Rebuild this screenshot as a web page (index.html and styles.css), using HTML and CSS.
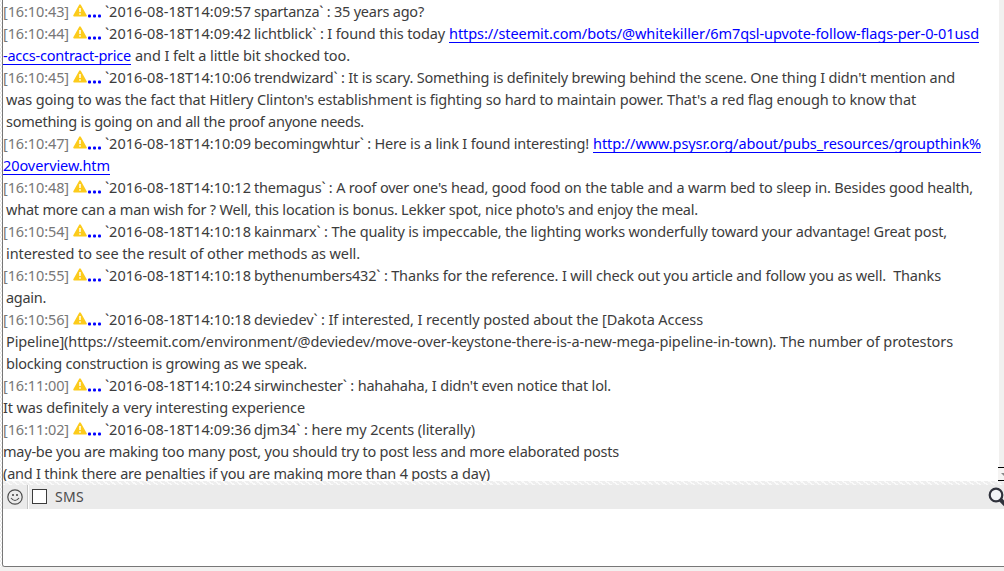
FILE: index.html
```html
<!DOCTYPE html>
<html lang="en">
<head>
    <meta charset="UTF-8">
    <meta name="viewport" content="width=device-width, initial-scale=1.0">
    <link rel="stylesheet" href="styles.css">
    <title>Chat</title>
</head>
<body>

    <svg class="defs" width="0" height="0">
        <symbol id="warn" viewBox="0 0 14 13">
            <path d="M7 1.2 L12.9 11.6 H1.1 Z" fill="#fccb1b" stroke="#fccb1b" stroke-width="1.8" stroke-linejoin="round"/>
            <path d="M7 4 V8 M7 9.2 V10.8" stroke="#fff" stroke-width="1.5"/>
        </symbol>
        <symbol id="dots" viewBox="0 0 15 4">
            <rect x="1" y="0.5" width="3" height="3" rx="1"/>
            <rect x="6" y="0.5" width="3" height="3" rx="1"/>
            <rect x="11" y="0.5" width="3" height="3" rx="1"/>
        </symbol>
    </svg>

    <div class="window">
        <div class="edge"></div>
        <div class="panel">
            <div class="chat">
                <div class="messages">
                    <div class="line"><span class="time" data-width="66">[16:10:43]</span><svg class="warn"><use href="#warn"/></svg><svg class="dots"><use href="#dots"/></svg><span class="stamp" data-width="146">`2016-08-18T14:09:57</span><span data-width="170">spartanza` : 35 years ago?</span></div>
                    <div class="line"><span class="time" data-width="66">[16:10:44]</span><svg class="warn"><use href="#warn"/></svg><svg class="dots"><use href="#dots"/></svg><span class="stamp" data-width="146">`2016-08-18T14:09:42</span><span data-width="191">lichtblick` : I found this today</span><a class="after" href="#" data-width="530">https://steemit.com/bots/@whitekiller/6m7qsl-upvote-follow-flags-per-0-01usd</a></div>
                    <div class="line"><a href="#" data-width="128">-accs-contract-price</a><span class="after" data-width="215">and I felt a little bit shocked too.</span></div>
                    <div class="line"><span class="time" data-width="66">[16:10:45]</span><svg class="warn"><use href="#warn"/></svg><svg class="dots"><use href="#dots"/></svg><span class="stamp" data-width="146">`2016-08-18T14:10:06</span><span data-width="701">trendwizard` : It is scary. Something is definitely brewing behind the scene. One thing I didn't mention and</span></div>
                    <div class="line indent"><span data-width="910">was going to was the fact that Hitlery Clinton's establishment is fighting so hard to maintain power. That's a red flag enough to know that</span></div>
                    <div class="line indent"><span data-width="358">something is going on and all the proof anyone needs.</span></div>
                    <div class="line"><span class="time" data-width="66">[16:10:47]</span><svg class="warn"><use href="#warn"/></svg><svg class="dots"><use href="#dots"/></svg><span class="stamp" data-width="146">`2016-08-18T14:10:09</span><span data-width="335">becomingwhtur` : Here is a link I found interesting!</span><a class="after" href="#" data-width="388">http://www.psysr.org/about/pubs_resources/groupthink%</a></div>
                    <div class="line"><a href="#" data-width="107">20overview.htm</a></div>
                    <div class="line"><span class="time" data-width="66">[16:10:48]</span><svg class="warn"><use href="#warn"/></svg><svg class="dots"><use href="#dots"/></svg><span class="stamp" data-width="146">`2016-08-18T14:10:12</span><span data-width="719">themagus` : A roof over one's head, good food on the table and a warm bed to sleep in. Besides good health,</span></div>
                    <div class="line indent"><span data-width="692">what more can a man wish for ? Well, this location is bonus. Lekker spot, nice photo's and enjoy the meal.</span></div>
                    <div class="line"><span class="time" data-width="66">[16:10:54]</span><svg class="warn"><use href="#warn"/></svg><svg class="dots"><use href="#dots"/></svg><span class="stamp" data-width="146">`2016-08-18T14:10:18</span><span data-width="693">kainmarx` : The quality is impeccable, the lighting works wonderfully toward your advantage! Great post,</span></div>
                    <div class="line indent"><span data-width="354">interested to see the result of other methods as well.</span></div>
                    <div class="line"><span class="time" data-width="66">[16:10:55]</span><svg class="warn"><use href="#warn"/></svg><svg class="dots"><use href="#dots"/></svg><span class="stamp" data-width="146">`2016-08-18T14:10:18</span><span data-width="687">bythenumbers432` : Thanks for the reference. I will check out you article and follow you as well.&nbsp; Thanks</span></div>
                    <div class="line indent"><span data-width="40">again.</span></div>
                    <div class="line"><span class="time" data-width="66">[16:10:56]</span><svg class="warn"><use href="#warn"/></svg><svg class="dots"><use href="#dots"/></svg><span class="stamp" data-width="146">`2016-08-18T14:10:18</span><span data-width="449">deviedev` : If interested, I recently posted about the [Dakota Access</span></div>
                    <div class="line indent"><span data-width="947">Pipeline](https://steemit.com/environment/@deviedev/move-over-keystone-there-is-a-new-mega-pipeline-in-town). The number of protestors</span></div>
                    <div class="line indent"><span data-width="301">blocking construction is growing as we speak.</span></div>
                    <div class="line"><span class="time" data-width="66">[16:11:00]</span><svg class="warn"><use href="#warn"/></svg><svg class="dots"><use href="#dots"/></svg><span class="stamp" data-width="146">`2016-08-18T14:10:24</span><span data-width="357">sirwinchester` : hahahaha, I didn't even notice that lol.</span></div>
                    <div class="line"><span data-width="302">It was definitely a very interesting experience</span></div>
                    <div class="line"><span class="time" data-width="66">[16:11:02]</span><svg class="warn"><use href="#warn"/></svg><svg class="dots"><use href="#dots"/></svg><span class="stamp" data-width="146">`2016-08-18T14:09:36</span><span data-width="221">djm34` : here my 2cents (literally)</span></div>
                    <div class="line"><span data-width="616">may-be you are making too many post, you should try to post less and more elaborated posts</span></div>
                    <div class="line"><span data-width="487">(and I think there are penalties if you are making more than 4 posts a day)</span></div>
                </div>
                <div class="scrollbar">
                    <div class="down"><span class="arrow"></span></div>
                </div>
            </div>

            <div class="splitter"></div>

            <div class="toolbar">
                <svg class="smiley" viewBox="0 0 16 16">
                    <circle cx="8" cy="8" r="7.2" fill="none" stroke="#4c4c4c" stroke-width="1.2"/>
                    <rect x="5.2" y="5" width="1.6" height="2" fill="#4c4c4c"/>
                    <rect x="9.2" y="5" width="1.6" height="2" fill="#4c4c4c"/>
                    <path d="M4 9 Q8 14 12 9" fill="none" stroke="#4c4c4c" stroke-width="1.2"/>
                </svg>
                <div class="divider"></div>
                <label class="sms"><input type="checkbox"><span data-width="29">SMS</span></label>
                <svg class="search" viewBox="0 0 16 20">
                    <circle cx="8" cy="8" r="6.3" fill="#f2f4f6" stroke="#30323c" stroke-width="2.2"/>
                    <path d="M11.8 12 L18 18.5" stroke="#30323c" stroke-width="4"/>
                </svg>
            </div>

            <div class="message-input" contenteditable="true"></div>
        </div>
    </div>

    <script>
        // Spread the letters so each run takes up its own width
        document.querySelectorAll('[data-width]').forEach(el => {
            const natural = el.getBoundingClientRect().width;
            const extra = Number(el.dataset.width) - natural;
            el.style.letterSpacing = (extra / el.textContent.length) + 'px';
        });
    </script>
</body>
</html>
```

FILE: styles.css
```css
body {
    margin: 0;
    height: 571px;
    overflow: hidden;
    background-color: #f2f1f0;
    color: #3c3c3c;
    font-family: 'Noto Sans', sans-serif;
    font-size: 14.5px;
}

.defs {
    display: block;
}

.window {
    display: flex;
    height: 567px;
}

.edge {
    width: 2px;
    background: repeating-conic-gradient(#fff 0 25%, #eaeaea 0 50%) 0 0 / 2px 4px;
}

.panel {
    box-sizing: border-box;
    width: 1002px;
    border-left: 1px solid #777;
    border-bottom: 1px solid #777;
    border-bottom-left-radius: 3px;
    background-color: #fff;
    overflow: hidden;
}

.chat {
    display: flex;
    height: 481px;
    overflow: hidden;
}

.messages {
    width: 996px;
    flex-shrink: 0;
}

.line {
    display: flex;
    height: 22px;
    line-height: 22px;
    white-space: pre;
}

.line span,
.line a {
    flex-shrink: 0;
}

.indent {
    padding-left: 3px;
}

.time {
    color: #777;
    margin-right: 4px;
}

.warn {
    width: 14px;
    height: 13px;
    margin-top: 4px;
}

.dots {
    width: 15px;
    height: 4px;
    margin: 14px 3px 0 0;
    fill: #00f;
}

.stamp {
    margin-right: 3px;
}

a {
    color: #00f;
    text-decoration: none;
    height: 20px;
    border-bottom: 1px solid #00f;
}

.after {
    margin-left: 4px;
}

.scrollbar {
    width: 5px;
    background-color: #f1f0ef;
    display: flex;
    align-items: flex-end;
    justify-content: flex-end;
}

.down {
    box-sizing: border-box;
    width: 6px;
    height: 14px;
    margin-left: -1px;
    flex-shrink: 0;
    border-top: 1px solid #000;
    border-bottom: 1px solid #000;
    background-color: #f5f4f3;
    display: flex;
    align-items: center;
    justify-content: flex-end;
}

.arrow {
    border-left: 3px solid transparent;
    border-top: 3px solid #888;
}

.splitter {
    height: 4px;
    background: repeating-linear-gradient(35deg, #fafafa 0 1.5px, #eee 1.5px 4px);
}

.toolbar {
    height: 24px;
    background-color: #ebebeb;
    display: flex;
    align-items: center;
}

.smiley {
    width: 16px;
    height: 16px;
    margin: -1px 4px 0;
}

.divider {
    width: 1px;
    height: 24px;
    background-color: #c4c4c4;
    border-right: 1px solid #fff;
}

.sms {
    display: flex;
    align-items: center;
    margin-top: -2px;
    color: #4c4c4c;
    font-size: 14px;
}

.sms input {
    appearance: none;
    box-sizing: border-box;
    width: 15px;
    height: 15px;
    margin: 0 8px 0 3px;
    border: 1px solid #3c3c3c;
    background-color: #fff;
}

.search {
    width: 16px;
    height: 20px;
    margin-left: auto;
    flex-shrink: 0;
}

.message-input {
    height: 57px;
    background-color: #fff;
    outline: none;
}
```
